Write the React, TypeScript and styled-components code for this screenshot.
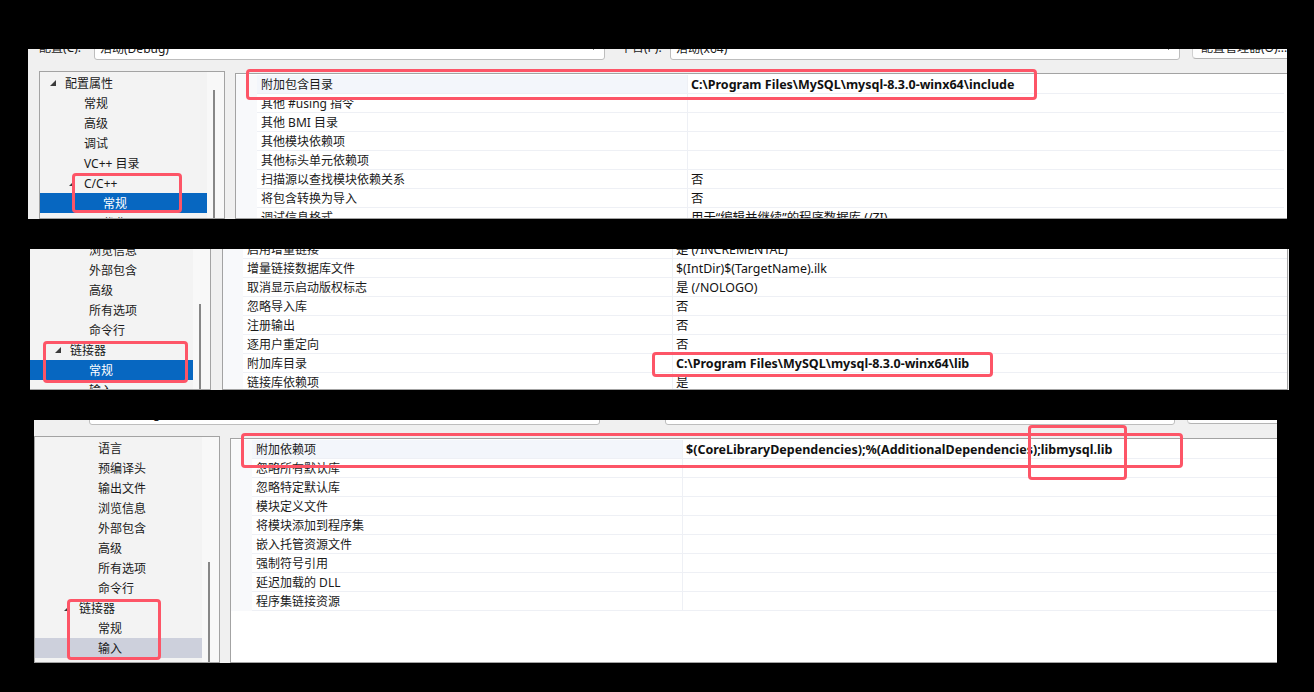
import React from 'react';
import styled, { createGlobalStyle } from 'styled-components';

const GlobalStyle = createGlobalStyle`
  html, body { margin: 0; padding: 0; background: #000; }
  body { font-family: "Noto Sans", "Noto Sans CJK SC", sans-serif; }
  #root { width: 1314px; height: 692px; overflow: hidden; }
`;

const Page = styled.div`
  width: 1314px;
  height: 692px;
  box-sizing: border-box;
  background: #000;
  padding-top: 49px;
  display: flex;
  flex-direction: column;
  gap: 30px;
`;

const Panel = styled.section<{ $left: number; $width: number; $height: number }>`
  position: relative;
  flex: none;
  margin-left: ${(p) => p.$left}px;
  width: ${(p) => p.$width}px;
  height: ${(p) => p.$height}px;
  background: #f0f0f0;
  overflow: hidden;
  display: flex;
  flex-direction: column;
  font-family: "Noto Sans", "Noto Sans CJK SC", sans-serif;
  font-size: 12px;
  color: #1a1a1a;
`;

const TopBar = styled.div<{ $height: number; $indent: number }>`
  flex: none;
  height: ${(p) => p.$height}px;
  padding-left: ${(p) => p.$indent}px;
  display: flex;
  align-items: flex-end;
  overflow: hidden;
`;

const BarLabel = styled.div<{ $width: number; $pad?: number }>`
  flex: none;
  width: ${(p) => p.$width}px;
  padding-left: ${(p) => p.$pad ?? 0}px;
  box-sizing: border-box;
  height: 22px;
  line-height: 20px;
  white-space: nowrap;
`;

const Combo = styled.div<{ $width: number }>`
  flex: none;
  width: ${(p) => p.$width}px;
  height: 23px;
  box-sizing: border-box;
  border: 1px solid #bdbdbd;
  border-radius: 3px;
  background: #fff;
  display: flex;
  align-items: center;
  justify-content: space-between;
  padding: 0 6px 2px 5px;
  white-space: nowrap;
`;

const BarButton = styled.div`
  flex: none;
  margin-left: 12px;
  margin-bottom: 1px;
  width: 130px;
  height: 23px;
  box-sizing: border-box;
  border: 1px solid #d0d0d0;
  border-bottom-color: #b4b4b4;
  border-radius: 4px;
  background: #fdfdfd;
  display: flex;
  align-items: center;
  padding: 0 0 2px 8px;
  white-space: nowrap;
`;

const Body = styled.div<{ $indent: number; $top: number }>`
  flex: 1;
  min-height: 0;
  display: flex;
  align-items: stretch;
  margin-left: ${(p) => p.$indent}px;
  margin-top: ${(p) => p.$top}px;
`;

const Tree = styled.div`
  flex: none;
  width: 186px;
  box-sizing: border-box;
  border: 1px solid #a3a3a3;
  background: #f3f3f3;
  display: flex;
  overflow: hidden;
`;

const TreeList = styled.ul<{ $scroll: number }>`
  list-style: none;
  flex: 1;
  min-width: 0;
  margin: ${(p) => -p.$scroll}px 0 0;
  padding: 1px 0 0;
`;

const TreeRow = styled.li<{ $level: number; $sel?: 'active' | 'inactive' }>`
  height: 20px;
  display: flex;
  align-items: center;
  padding-left: ${(p) => 10 + 19 * p.$level}px;
  white-space: nowrap;
  background: ${(p) => (p.$sel === 'active' ? '#0767c1' : p.$sel === 'inactive' ? '#cdd0dc' : 'transparent')};
  color: ${(p) => (p.$sel === 'active' ? '#ffffff' : '#1a1a1a')};
`;

const Expander = styled.span`
  flex: none;
  width: 15px;
  height: 20px;
  display: flex;
  align-items: center;
`;

const ScrollTrack = styled.div<{ $thumbTop: number }>`
  flex: none;
  width: 17px;
  box-sizing: border-box;
  background: #f8f8f8;
  padding-top: ${(p) => p.$thumbTop}px;
  display: flex;
`;

const Thumb = styled.div`
  width: 2px;
  margin-left: 6px;
  background: #878787;
`;

const Grid = styled.div<{ $gap: number; $top: number; $rightBorder?: boolean }>`
  flex: 1;
  min-width: 0;
  margin-left: ${(p) => p.$gap}px;
  margin-top: ${(p) => p.$top}px;
  margin-right: ${(p) => (p.$rightBorder ? 1 : 0)}px;
  box-sizing: border-box;
  border: 1px solid #a3a3a3;
  border-right-width: ${(p) => (p.$rightBorder ? 1 : 0)}px;
  background: #fff;
  overflow: hidden;
`;

const GridList = styled.div<{ $scroll: number; $padRight: number }>`
  margin-top: ${(p) => -p.$scroll}px;
  margin-right: ${(p) => p.$padRight}px;
  padding-top: 1px;
`;

const PropRow = styled.div<{ $gutter: number; $name: number }>`
  display: grid;
  grid-template-columns: ${(p) => p.$gutter}px ${(p) => p.$name}px 1fr;
  height: 19px;
`;

const Gutter = styled.div`
  background: #f8f9fb;
`;

const NameCell = styled.div<{ $hl?: boolean }>`
  box-sizing: border-box;
  border-bottom: 1px solid #eef0f5;
  border-right: 1px solid #eef0f5;
  background: ${(p) => (p.$hl ? '#f3f6fb' : '#fff')};
  padding-left: 4px;
  display: flex;
  align-items: center;
  white-space: nowrap;
  overflow: hidden;
`;

const ValueCell = styled.div<{ $bold?: boolean }>`
  box-sizing: border-box;
  border-bottom: 1px solid #eef0f5;
  padding-left: 3px;
  display: flex;
  align-items: center;
  white-space: nowrap;
  overflow: hidden;
  font-size: ${(p) => (p.$bold ? 12.5 : 12.4)}px;
  font-weight: ${(p) => (p.$bold ? 700 : 400)};
  color: #111;
`;

const Callout = styled.div<{ $x: number; $y: number; $w: number; $h: number }>`
  position: absolute;
  left: ${(p) => p.$x}px;
  top: ${(p) => p.$y}px;
  width: ${(p) => p.$w}px;
  height: ${(p) => p.$h}px;
  box-sizing: border-box;
  border: 3px solid #fd5567;
  border-radius: 4px;
  pointer-events: none;
`;

type TreeItem = { level: number; text: string; exp?: boolean; sel?: 'active' | 'inactive' };
type PropItem = { name: string; value?: string; bold?: boolean; hl?: boolean };
type Box = { x: number; y: number; w: number; h: number };

const Triangle = () => (
  <svg width="6" height="6" viewBox="0 0 6 6">
    <polygon points="6,0 6,6 0,6" fill="#3a3a3a" />
  </svg>
);

const Chevron = () => (
  <svg width="9" height="6" viewBox="0 0 9 6">
    <polyline points="1,1 4.5,4.5 8,1" fill="none" stroke="#555" strokeWidth="1" />
  </svg>
);

type PageProps = {
  left: number;
  width: number;
  height: number;
  indent: number;
  bar?: number;
  bodyTop: number;
  treeScroll: number;
  thumbTop: number;
  gridGap: number;
  gridTop: number;
  gridScroll: number;
  gutter: number;
  nameWidth: number;
  padRight: number;
  rightBorder?: boolean;
  tree: TreeItem[];
  props: PropItem[];
  boxes: Box[];
};

const PropertyPage = (p: PageProps) => (
  <Panel $left={p.left} $width={p.width} $height={p.height}>
    {p.bar !== undefined && (
      <TopBar $height={p.bar} $indent={p.indent}>
        <BarLabel $width={55}>配置(C):</BarLabel>
        <Combo $width={511}>
          <span>活动(Debug)</span>
          <Chevron />
        </Combo>
        <BarLabel $width={65} $pad={15}>平台(P):</BarLabel>
        <Combo $width={510}>
          <span>活动(x64)</span>
          <Chevron />
        </Combo>
        <BarButton>配置管理器(O)...</BarButton>
      </TopBar>
    )}
    <Body $indent={p.indent} $top={p.bodyTop}>
      <Tree>
        <TreeList $scroll={p.treeScroll}>
          {p.tree.map((t, i) => (
            <TreeRow key={i} $level={t.level} $sel={t.sel}>
              <Expander>{t.exp && <Triangle />}</Expander>
              {t.text}
            </TreeRow>
          ))}
        </TreeList>
        <ScrollTrack $thumbTop={p.thumbTop}>
          <Thumb />
        </ScrollTrack>
      </Tree>
      <Grid $gap={p.gridGap} $top={p.gridTop} $rightBorder={p.rightBorder}>
        <GridList $scroll={p.gridScroll} $padRight={p.padRight}>
          {p.props.map((r, i) => (
            <PropRow key={i} $gutter={p.gutter} $name={p.nameWidth}>
              <Gutter />
              <NameCell $hl={r.hl}>{r.name}</NameCell>
              <ValueCell $bold={r.bold}>{r.value}</ValueCell>
            </PropRow>
          ))}
        </GridList>
      </Grid>
    </Body>
    {p.boxes.map((b, i) => (
      <Callout key={i} $x={b.x} $y={b.y} $w={b.w} $h={b.h} />
    ))}
  </Panel>
);

const tree1: TreeItem[] = [
  { level: 0, text: '配置属性', exp: true },
  { level: 1, text: '常规' },
  { level: 1, text: '高级' },
  { level: 1, text: '调试' },
  { level: 1, text: 'VC++ 目录' },
  { level: 1, text: 'C/C++', exp: true },
  { level: 2, text: '常规', sel: 'active' },
  { level: 2, text: '优化' },
];

const props1: PropItem[] = [
  { name: '附加包含目录', value: 'C:\\Program Files\\MySQL\\mysql-8.3.0-winx64\\include', bold: true, hl: true },
  { name: '其他 #using 指令' },
  { name: '其他 BMI 目录' },
  { name: '其他模块依赖项' },
  { name: '其他标头单元依赖项' },
  { name: '扫描源以查找模块依赖关系', value: '否' },
  { name: '将包含转换为导入', value: '否' },
  { name: '调试信息格式', value: '用于“编辑并继续”的程序数据库 (/ZI)' },
];

const tree2: TreeItem[] = [
  { level: 2, text: '浏览信息' },
  { level: 2, text: '外部包含' },
  { level: 2, text: '高级' },
  { level: 2, text: '所有选项' },
  { level: 2, text: '命令行' },
  { level: 1, text: '链接器', exp: true },
  { level: 2, text: '常规', sel: 'active' },
  { level: 2, text: '输入' },
];

const props2: PropItem[] = [
  { name: '启用增量链接', value: '是 (/INCREMENTAL)' },
  { name: '增量链接数据库文件', value: '$(IntDir)$(TargetName).ilk' },
  { name: '取消显示启动版权标志', value: '是 (/NOLOGO)' },
  { name: '忽略导入库', value: '否' },
  { name: '注册输出', value: '否' },
  { name: '逐用户重定向', value: '否' },
  { name: '附加库目录', value: 'C:\\Program Files\\MySQL\\mysql-8.3.0-winx64\\lib', bold: true },
  { name: '链接库依赖项', value: '是' },
];

const tree3: TreeItem[] = [
  { level: 2, text: '语言' },
  { level: 2, text: '预编译头' },
  { level: 2, text: '输出文件' },
  { level: 2, text: '浏览信息' },
  { level: 2, text: '外部包含' },
  { level: 2, text: '高级' },
  { level: 2, text: '所有选项' },
  { level: 2, text: '命令行' },
  { level: 1, text: '链接器', exp: true },
  { level: 2, text: '常规' },
  { level: 2, text: '输入', sel: 'inactive' },
  { level: 2, text: '清单文件' },
];

const props3: PropItem[] = [
  { name: '附加依赖项', value: '$(CoreLibraryDependencies);%(AdditionalDependencies);libmysql.lib', bold: true, hl: true },
  { name: '忽略所有默认库' },
  { name: '忽略特定默认库' },
  { name: '模块定义文件' },
  { name: '将模块添加到程序集' },
  { name: '嵌入托管资源文件' },
  { name: '强制符号引用' },
  { name: '延迟加载的 DLL' },
  { name: '程序集链接资源' },
];

export default function App() {
  return (
    <>
      <GlobalStyle />
      <Page>
        <PropertyPage
          left={28}
          width={1259}
          height={170}
          indent={11}
          bar={11}
          bodyTop={11}
          treeScroll={0}
          thumbTop={18}
          gridGap={10}
          gridTop={2}
          gridScroll={0}
          gutter={21}
          nameWidth={431}
          padRight={3}
          tree={tree1}
          props={props1}
          boxes={[
            { x: 218, y: 20, w: 791, h: 31 },
            { x: 44, y: 124, w: 110, h: 40 },
          ]}
        />
        <PropertyPage
          left={30}
          width={1259}
          height={141}
          indent={-5}
          bodyTop={-1}
          treeScroll={10}
          thumbTop={55}
          gridGap={11}
          gridTop={0}
          gridScroll={10}
          gutter={20}
          nameWidth={430}
          padRight={0}
          rightBorder
          tree={tree2}
          props={props2}
          boxes={[
            { x: 13, y: 92, w: 145, h: 42 },
            { x: 622, y: 103, w: 341, h: 25 },
          ]}
        />
        <PropertyPage
          left={34}
          width={1243}
          height={243}
          indent={0}
          bar={5}
          bodyTop={11}
          treeScroll={0}
          thumbTop={125}
          gridGap={10}
          gridTop={2}
          gridScroll={0}
          gutter={21}
          nameWidth={431}
          padRight={0}
          tree={tree3}
          props={props3}
          boxes={[
            { x: 207, y: 13, w: 942, h: 35 },
            { x: 994, y: 5, w: 99, h: 55 },
            { x: 33, y: 179, w: 94, h: 61 },
          ]}
        />
      </Page>
    </>
  );
}
